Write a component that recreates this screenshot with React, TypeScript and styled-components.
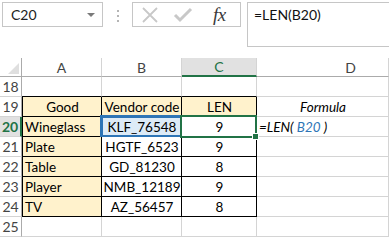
import React from 'react';
import styled, { createGlobalStyle, css } from 'styled-components';

const Global = createGlobalStyle`
  html, body { margin: 0; padding: 0; background: #fff; }
  body { font-family: Lato, "Liberation Sans", sans-serif; overflow: hidden; }
`;

const Page = styled.div`
  width: 389px;
  height: 241px;
  overflow: hidden;
  display: flex;
  flex-direction: column;
  background: #fff;
`;

const FormulaBar = styled.div`
  height: 58px;
  flex: none;
  box-sizing: border-box;
  padding: 2px 0 0 2px;
  display: flex;
  align-items: flex-start;
`;

const NameBox = styled.div`
  width: 101px;
  height: 25px;
  box-sizing: border-box;
  border: 1px solid #c6c6c6;
  display: flex;
  align-items: center;
  justify-content: space-between;
  padding: 0 7px 0 8px;
  font-size: 14px;
  color: #222;
`;

const Caret = styled.span`
  width: 0;
  height: 0;
  border-left: 4px solid transparent;
  border-right: 4px solid transparent;
  border-top: 4px solid #7a7a7a;
`;

const Dots = styled.div`
  margin: 8px 0 0 14px;
  display: flex;
  flex-direction: column;
  gap: 3px;
  span { width: 2px; height: 2px; background: #b5b5b5; display: block; }
`;

const FxBox = styled.div`
  margin-left: 13px;
  width: 109px;
  height: 25px;
  box-sizing: border-box;
  border: 1px solid #c6c6c6;
  display: flex;
  align-items: center;
  padding: 0 6px 0 8px;
  gap: 14px;
`;

const Fx = styled.span`
  font-family: "Liberation Serif", serif;
  font-style: italic;
  font-size: 19px;
  color: #3a3a3a;
  margin-left: 6px;
  letter-spacing: -0.5px;
`;

const FormulaInput = styled.div`
  margin-left: 6px;
  flex: 1;
  height: 45px;
  box-sizing: border-box;
  border: 1px solid #c6c6c6;
  border-right: none;
  padding: 3px 0 0 6px;
  font-size: 14px;
  color: #111;
`;

const Sheet = styled.div`
  display: grid;
  grid-template-columns: 22px 80px 80px 75px 1fr;
  grid-template-rows: 19px;
  grid-auto-rows: 20px;
`;

const HeadCell = styled.div<{ $sel?: boolean; $pl?: number }>`
  box-sizing: border-box;
  border-right: 1px solid #d4d4d4;
  border-bottom: 1px solid #ababab;
  display: flex;
  align-items: center;
  justify-content: center;
  font-size: 14px;
  color: #444;
  padding-left: ${p => p.$pl || 0}px;
  ${p => p.$sel && css`
    background: #e1e1e1;
    color: #217346;
    border-bottom: 2px solid #217346;
  `}
`;

const Corner = styled.div`
  box-sizing: border-box;
  border-right: 1px solid #ababab;
  border-bottom: 1px solid #ababab;
  position: relative;
  &::after {
    content: '';
    position: absolute;
    right: 2px;
    bottom: 2px;
    width: 0;
    height: 0;
    border-left: 11px solid transparent;
    border-bottom: 11px solid #dfdfdf;
  }
`;

const RowHead = styled.div<{ $sel?: boolean }>`
  box-sizing: border-box;
  border-right: 1px solid #ababab;
  border-bottom: 1px solid #d4d4d4;
  display: flex;
  align-items: flex-end;
  justify-content: center;
  padding-bottom: 1px;
  font-size: 14px;
  color: #444;
  ${p => p.$sel && css`
    background: #e1e1e1;
    color: #217346;
    font-weight: 700;
    border-right: 2px solid #217346;
  `}
`;

type Align = 'left' | 'center' | 'right';

const Cell = styled.div<{
  $align?: Align;
  $fill?: string;
  $box?: boolean;
  $left?: boolean;
  $top?: boolean;
  $italic?: boolean;
  $pr?: number;
}>`
  position: relative;
  box-sizing: border-box;
  border-right: 1px solid ${p => (p.$box ? '#000' : '#d4d4d4')};
  border-bottom: 1px solid ${p => (p.$box || p.$top ? '#000' : '#d4d4d4')};
  ${p => p.$left && css`border-left: 1px solid #000;`}
  background: ${p => p.$fill || '#fff'};
  display: flex;
  align-items: flex-end;
  justify-content: ${p => (p.$align === 'left' ? 'flex-start' : p.$align === 'right' ? 'flex-end' : 'center')};
  padding: 0 ${p => p.$pr ?? 1}px 1px 2px;
  font-size: 13.5px;
  color: #000;
  white-space: nowrap;
  font-style: ${p => (p.$italic ? 'italic' : 'normal')};
`;

const RefFrame = styled.div`
  position: absolute;
  left: -2px;
  top: -2px;
  right: -2px;
  bottom: -2px;
  border: 3px solid #2e75b6;
  background: #ddebf7;
  z-index: 0;
`;

const ActiveFrame = styled.div`
  position: absolute;
  left: -2px;
  top: -2px;
  right: -1px;
  bottom: -2px;
  border: 2px solid #217346;
  z-index: 2;
  &::after {
    content: '';
    position: absolute;
    right: -4px;
    bottom: -4px;
    width: 5px;
    height: 5px;
    background: #217346;
    border: 1px solid #fff;
  }
`;

const CellText = styled.span`
  position: relative;
  z-index: 1;
`;

const Ref = styled.span`
  color: #2e75b6;
`;

const YELLOW = '#fff2cc';

const rows = [
  { n: 21, a: 'Plate', b: 'HGTF_6523', c: '9' },
  { n: 22, a: 'Table', b: 'GD_81230', c: '8' },
  { n: 23, a: 'Player', b: 'NMB_12189', c: '9' },
  { n: 24, a: 'TV', b: 'AZ_56457', c: '8' },
];

export default function App() {
  return (
    <Page>
      <Global />
      <FormulaBar>
        <NameBox>
          <span>C20</span>
          <Caret />
        </NameBox>
        <Dots>
          <span />
          <span />
          <span />
        </Dots>
        <FxBox>
          <svg width="18" height="16" viewBox="0 0 18 16">
            <path d="M2 1 L16 15 M16 1 L2 15" stroke="#c8c8c8" strokeWidth="1.8" fill="none" />
          </svg>
          <svg width="20" height="16" viewBox="0 0 20 16">
            <path d="M2 8 L7 13 L18 2" stroke="#c8c8c8" strokeWidth="3" fill="none" />
          </svg>
          <Fx>fx</Fx>
        </FxBox>
        <FormulaInput>=LEN(B20)</FormulaInput>
      </FormulaBar>
      <Sheet>
        <Corner />
        <HeadCell>A</HeadCell>
        <HeadCell>B</HeadCell>
        <HeadCell $sel>C</HeadCell>
        <HeadCell $pl={56}>D</HeadCell>

        <RowHead>18</RowHead>
        <Cell $top />
        <Cell $top />
        <Cell $top />
        <Cell />

        <RowHead>19</RowHead>
        <Cell $box $left $fill={YELLOW}>Good</Cell>
        <Cell $box $fill={YELLOW}>Vendor code</Cell>
        <Cell $box $fill={YELLOW}>LEN</Cell>
        <Cell $align="right" $italic $pr={42}>Formula</Cell>

        <RowHead $sel>20</RowHead>
        <Cell $box $left $fill={YELLOW} $align="left">Wineglass</Cell>
        <Cell $box>
          <RefFrame />
          <CellText>KLF_76548</CellText>
        </Cell>
        <Cell $box>
          <ActiveFrame />
          <CellText>9</CellText>
        </Cell>
        <Cell $align="left" $italic>
          <CellText>=LEN( <Ref>B20</Ref> )</CellText>
        </Cell>

        {rows.map(r => (
          <React.Fragment key={r.n}>
            <RowHead>{r.n}</RowHead>
            <Cell $box $left $fill={YELLOW} $align="left">{r.a}</Cell>
            <Cell $box>{r.b}</Cell>
            <Cell $box>{r.c}</Cell>
            <Cell />
          </React.Fragment>
        ))}

        <RowHead>25</RowHead>
        <Cell />
        <Cell />
        <Cell />
        <Cell />
      </Sheet>
    </Page>
  );
}
